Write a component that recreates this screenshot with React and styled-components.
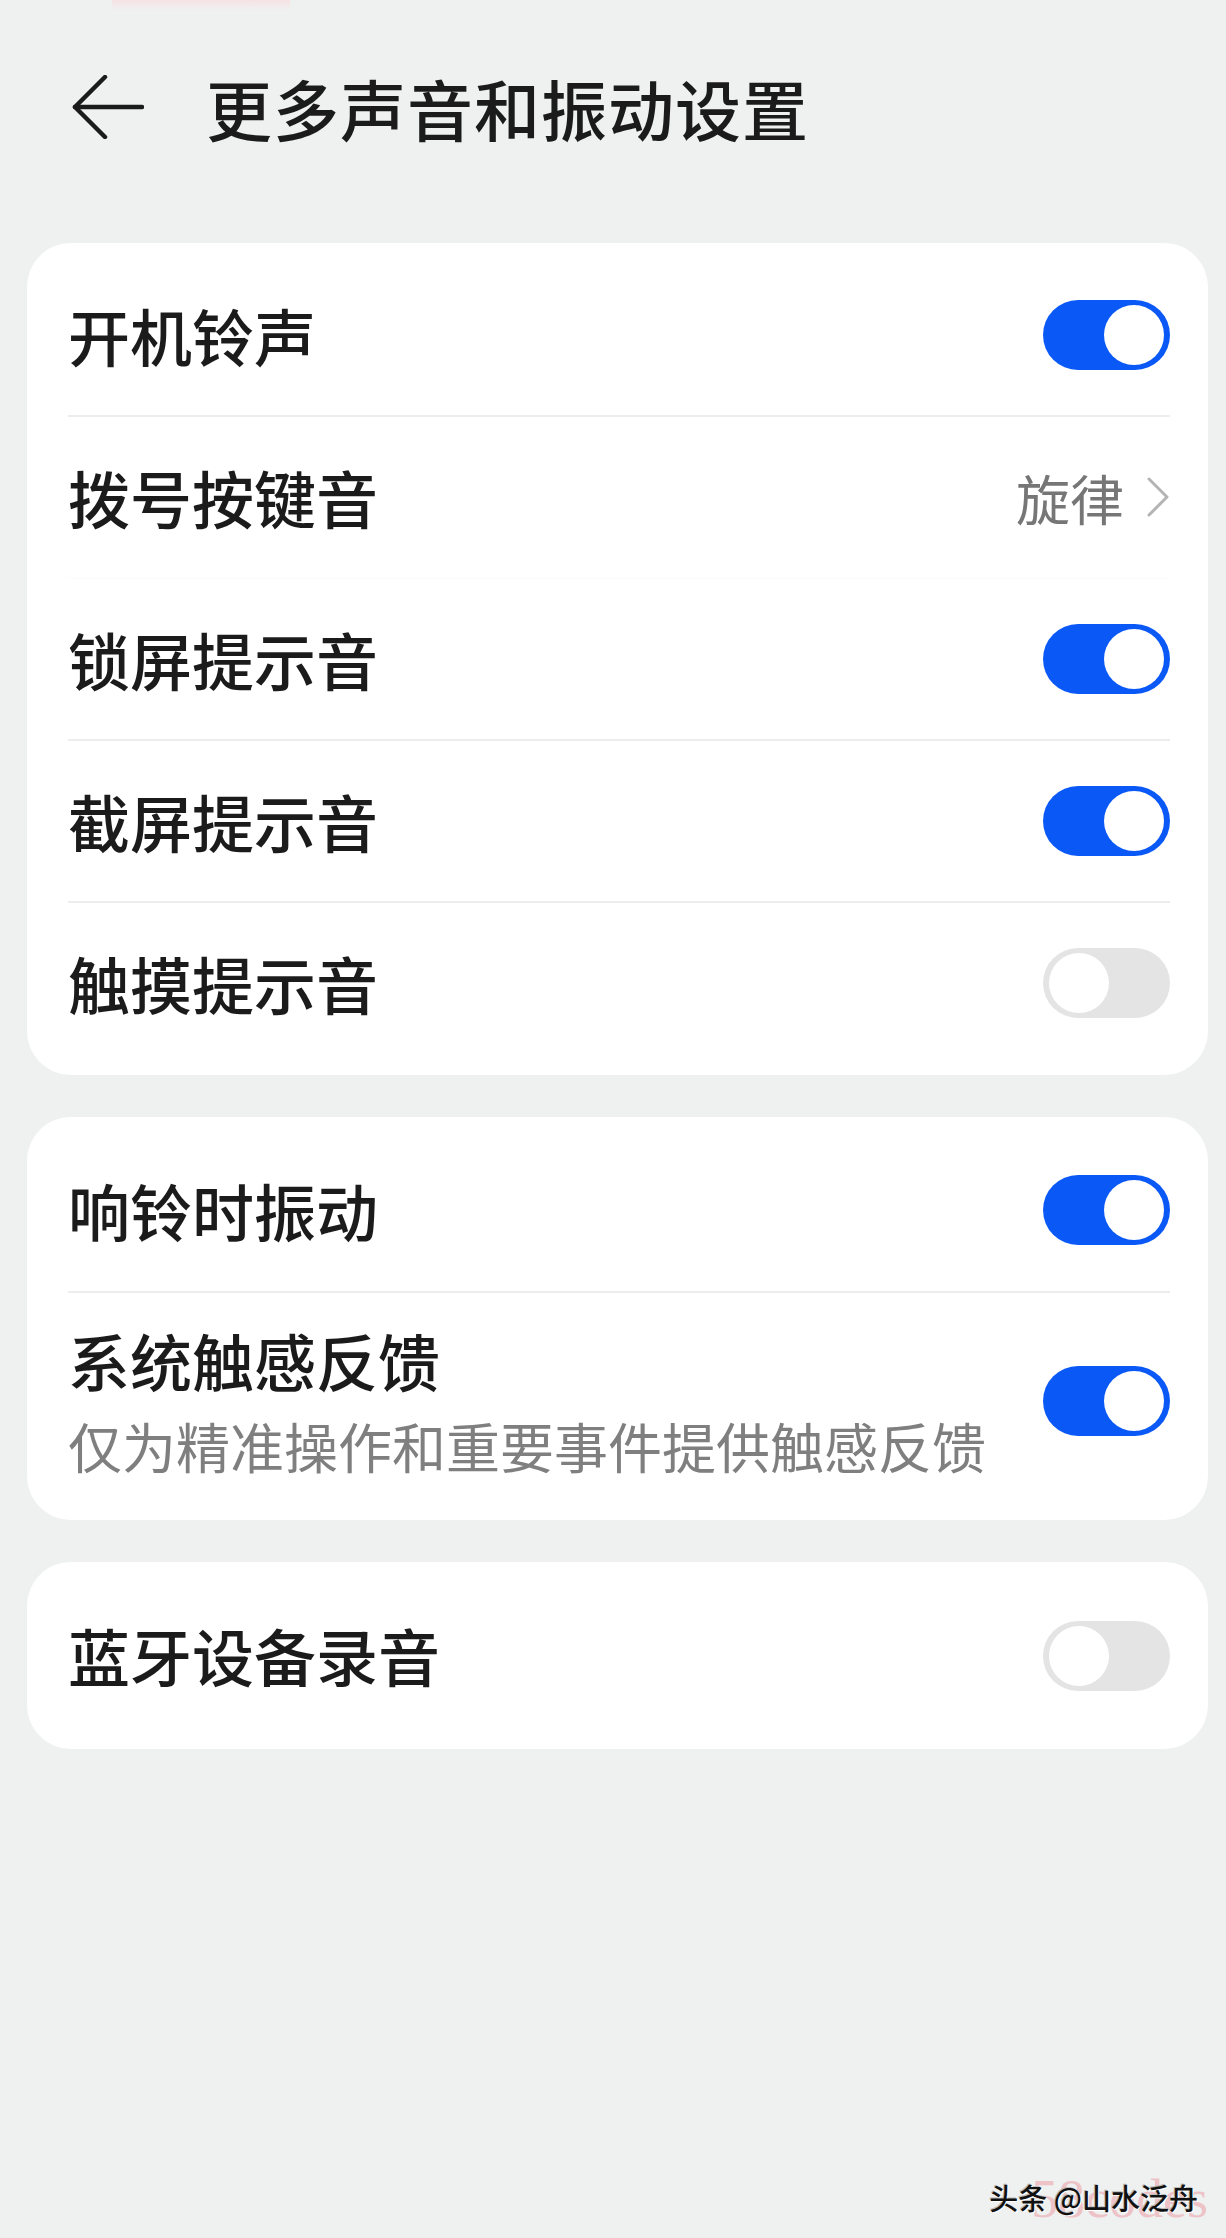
import React from 'react';
import styled, { createGlobalStyle } from 'styled-components';

const GlobalStyle = createGlobalStyle`
  html, body {
    margin: 0;
    padding: 0;
    background: #eff1f1;
  }
  body {
    font-family: "Noto Sans CJK SC", "Noto Sans", sans-serif;
    color: #1b1b1b;
  }
`

const Page = styled.div`
  position: relative;
  width: 1226px;
  min-height: 2238px;
  background: #eff1f1;
  overflow: hidden;
`

const TopStrip = styled.div`
  height: 12px;
  width: 178px;
  margin-left: 112px;
  background: linear-gradient(180deg, #f6e2e3 0%, #f1eced 60%, #eff1f1 100%);
`

const Header = styled.div`
  height: 190px;
  display: flex;
  align-items: center;
  padding-left: 72px;
  gap: 62px;
`

const BackButton = styled.div`
  width: 72px;
  height: 64px;
  display: flex;
  align-items: center;
  justify-content: center;
  svg {
    display: block;
  }
`

const Title = styled.h1`
  margin: 0;
  font-size: 66px;
  font-weight: 500;
  letter-spacing: 1px;
  line-height: 1;
  color: #1b1b1b;
`

const CardList = styled.div`
  display: flex;
  flex-direction: column;
  gap: 42px;
  margin: 41px 18px 0 27px;
`

const Card = styled.div`
  background: #fff;
  border-radius: 44px;
  padding: 12px 0;
`

const Row = styled.div`
  height: ${p => p.h || 160}px;
  display: flex;
  align-items: center;
  justify-content: space-between;
  padding: 0 38px 0 41px;
  box-sizing: border-box;
`

const Divider = styled.div`
  height: 2px;
  margin: 0 38px 0 41px;
  background: ${p => (p.faint ? '#fdfdfd' : '#ededed')};
`

const TextBlock = styled.div`
  display: flex;
  flex-direction: column;
  gap: 10px;
`

const Label = styled.div`
  font-size: 62px;
  font-weight: 500;
  line-height: 1.3;
  color: #1b1b1b;
  white-space: nowrap;
`

const SubLabel = styled.div`
  font-size: 54px;
  line-height: 1.3;
  color: #7f7f7f;
  white-space: nowrap;
`

const Value = styled.div`
  display: flex;
  align-items: center;
  gap: 22px;
  font-size: 54px;
  color: #767676;
  svg {
    display: block;
  }
`

const Track = styled.div`
  position: relative;
  width: 127px;
  height: 70px;
  border-radius: 35px;
  background: ${p => (p.on ? '#0a59f7' : '#e4e4e4')};
  flex-shrink: 0;
`

const Knob = styled.span`
  position: absolute;
  top: 5px;
  ${p => (p.on ? 'right: 6px;' : 'left: 6px;')}
  width: 60px;
  height: 60px;
  border-radius: 50%;
  background: #fff;
`

const Watermark = styled.div`
  position: absolute;
  right: 18px;
  bottom: 12px;
  width: 240px;
  height: 56px;
`

const WaterBrand = styled.span`
  position: absolute;
  right: 0;
  bottom: 0;
  font-family: "Liberation Serif", serif;
  font-size: 54px;
  line-height: 1;
  color: rgba(236, 150, 160, 0.5);
`

const WaterName = styled.span`
  position: absolute;
  right: 10px;
  bottom: 14px;
  font-size: 29px;
  font-weight: 500;
  line-height: 1;
  color: #111;
  white-space: nowrap;
  text-shadow: 1px 1px 0 #fff, -1px -1px 0 #bbb;
`

const Toggle = ({ on }) => (
  <Track on={on ? 1 : 0}>
    <Knob on={on ? 1 : 0} />
  </Track>
)

const BackArrow = () => (
  <svg width="72" height="64" viewBox="0 0 72 64" fill="none" stroke="#1b1b1b" strokeWidth="4.5" strokeLinecap="round" strokeLinejoin="round">
    <polyline points="33,2 3,32 33,62" />
    <line x1="3" y1="32" x2="70" y2="32" />
  </svg>
)

const Chevron = () => (
  <svg width="24" height="42" viewBox="0 0 24 42" fill="none" stroke="#b4b4b4" strokeWidth="3" strokeLinecap="round" strokeLinejoin="round">
    <polyline points="3,3 21,21 3,39" />
  </svg>
)

export default function App() {
  return (
    <Page>
      <GlobalStyle />
      <TopStrip />
      <Header>
        <BackButton>
          <BackArrow />
        </BackButton>
        <Title>更多声音和振动设置</Title>
      </Header>

      <CardList>
        <Card>
          <Row>
            <Label>开机铃声</Label>
            <Toggle on />
          </Row>
          <Divider />
          <Row>
            <Label>拨号按键音</Label>
            <Value>
              旋律
              <Chevron />
            </Value>
          </Row>
          <Divider faint />
          <Row>
            <Label>锁屏提示音</Label>
            <Toggle on />
          </Row>
          <Divider />
          <Row>
            <Label>截屏提示音</Label>
            <Toggle on />
          </Row>
          <Divider />
          <Row>
            <Label>触摸提示音</Label>
            <Toggle />
          </Row>
        </Card>

        <Card>
          <Row h={162}>
            <Label>响铃时振动</Label>
            <Toggle on />
          </Row>
          <Divider />
          <Row h={215}>
            <TextBlock>
              <Label>系统触感反馈</Label>
              <SubLabel>仅为精准操作和重要事件提供触感反馈</SubLabel>
            </TextBlock>
            <Toggle on />
          </Row>
        </Card>

        <Card>
          <Row h={163}>
            <Label>蓝牙设备录音</Label>
            <Toggle />
          </Row>
        </Card>
      </CardList>

      <Watermark>
        <WaterBrand>58codes</WaterBrand>
        <WaterName>头条 @山水泛舟</WaterName>
      </Watermark>
    </Page>
  )
}
